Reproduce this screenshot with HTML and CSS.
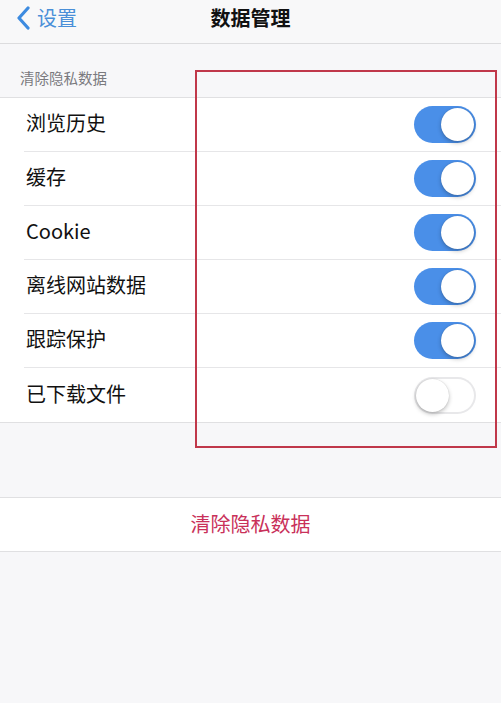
FILE: index.html
```html
<!DOCTYPE html>
<html lang="zh-CN">

<head>
    <meta charset="UTF-8">
    <meta name="viewport" content="width=device-width, initial-scale=1.0">
    <title>数据管理</title>
    <link rel="stylesheet" href="styles.css">
</head>

<body>
    <div class="navbar">
        <a class="back" href="#">
            <svg width="14" height="24" viewBox="0 0 14 24">
                <path d="M12 2 L3 12 L12 22" fill="none" stroke="#3d8be0" stroke-width="3.2" stroke-linecap="round" stroke-linejoin="round"/>
            </svg>
            <span>设置</span>
        </a>
        <div class="title">数据管理</div>
    </div>

    <div class="section-header">清除隐私数据</div>

    <div class="group">
        <div class="row"><span class="label">浏览历史</span><span class="switch on"></span></div>
        <div class="row"><span class="label">缓存</span><span class="switch on"></span></div>
        <div class="row"><span class="label">Cookie</span><span class="switch on"></span></div>
        <div class="row"><span class="label">离线网站数据</span><span class="switch on"></span></div>
        <div class="row"><span class="label">跟踪保护</span><span class="switch on"></span></div>
        <div class="row"><span class="label">已下载文件</span><span class="switch"></span></div>
    </div>

    <div class="group action">
        <div class="clear-btn">清除隐私数据</div>
    </div>

    <!-- annotation box over the switches -->
    <div class="highlight"></div>
</body>

</html>
```

FILE: styles.css
```css
/* Global styles */

body {
    margin: 0;
    font-family: "Noto Sans CJK SC", "Noto Sans", sans-serif;
    background-color: #f7f7f9;
    color: #111;
    position: relative;
    height: 703px;
    overflow: hidden;
}
/* Nav bar */

.navbar {
    height: 43px;
    position: relative;
    display: flex;
    align-items: center;
    justify-content: center;
    border-bottom: 1px solid #dcdcde;
    background-color: #f8f8f9;
}

.back {
    position: absolute;
    left: 16px;
    top: 6px;
    display: flex;
    align-items: center;
    gap: 7px;
    text-decoration: none;
    color: #4a8fd8;
    font-size: 20px;
    line-height: 24px;
}

.title {
    font-size: 20px;
    font-weight: bold;
    margin-top: -9px;
    color: #111;
}
/* Section header */

.section-header {
    height: 53px;
    box-sizing: border-box;
    padding: 24px 0 0 20px;
    font-size: 14.5px;
    line-height: 20px;
    color: #7a7a7e;
}
/* Table group */

.group {
    background-color: #fff;
    border-top: 1px solid #e0e0e2;
    border-bottom: 1px solid #e0e0e2;
}

.row {
    height: 54px;
    margin-left: 24px;
    padding-right: 25px;
    display: flex;
    align-items: center;
    justify-content: space-between;
    border-bottom: 1px solid #e6e6e8;
    box-sizing: border-box;
}

.row:last-child {
    border-bottom: none;
}

.label {
    font-size: 20px;
    padding-left: 2px;
    margin-top: -4px;
}
/* Switch */

.switch {
    width: 62px;
    height: 37px;
    border-radius: 19px;
    background-color: #fff;
    box-shadow: inset 0 0 0 2px #e8e8ea;
    position: relative;
    box-sizing: border-box;
}

.switch::after {
    content: "";
    position: absolute;
    top: 2px;
    left: 2px;
    width: 33px;
    height: 33px;
    border-radius: 50%;
    background-color: #fff;
    box-shadow: 0 2px 4px rgba(0, 0, 0, 0.25), 0 0 1px rgba(0, 0, 0, 0.2);
}

.switch.on {
    background-color: #4a8fe8;
    box-shadow: none;
}

.switch.on::after {
    left: 27px;
}
/* Clear button */

.action {
    margin-top: 74px;
}

.clear-btn {
    height: 53px;
    display: flex;
    align-items: center;
    justify-content: center;
    font-size: 20px;
    color: #c9315a;
    padding-bottom: 2px;
    box-sizing: border-box;
}
/* Red annotation box */

.highlight {
    position: absolute;
    left: 195px;
    top: 70px;
    width: 302px;
    height: 378px;
    box-sizing: border-box;
    border: 2px solid #c0384a;
}
```
